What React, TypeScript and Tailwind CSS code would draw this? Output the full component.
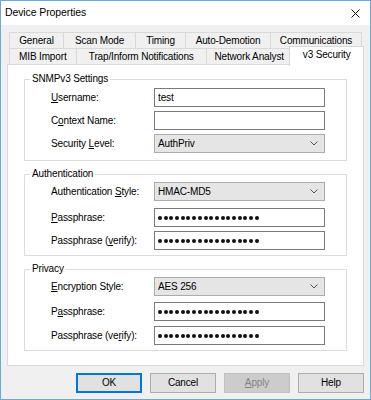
import React from "react";

const topTabs = [
  { label: "General", w: "w-[54px]" },
  { label: "Scan Mode", w: "w-[72px]" },
  { label: "Timing", w: "w-[50px]" },
  { label: "Auto-Demotion", w: "w-[85px]" },
  { label: "Communications", w: "w-[92px] border-r" },
];

const bottomTabs = [
  { label: "MIB Import", w: "w-[67px]" },
  { label: "Trap/Inform Notifications", w: "w-[131px]" },
  { label: "Network Analyst", w: "w-[86px]" },
];

function Key({ children }: { children: React.ReactNode }) {
  return <span className="underline underline-offset-[1px]">{children}</span>;
}

function Row({ label, children, className = "" }: { label: React.ReactNode; children: React.ReactNode; className?: string }) {
  return (
    <div className={`flex items-center pl-[26px] ${className}`}>
      <div className="w-[103px] leading-[12px]">{label}</div>
      {children}
    </div>
  );
}

function TextBox({ value }: { value: string }) {
  return (
    <div className="w-[171px] h-[19px] border border-[#7a7a7a] bg-white flex items-center pl-[3px] leading-[12px]">
      {value}
    </div>
  );
}

function Secret() {
  return (
    <div className="w-[171px] h-[19px] border border-[#7a7a7a] bg-white flex items-center pl-[3px] gap-[1.7px]">
      {Array.from({ length: 18 }).map((_, i) => (
        <span key={i} className="w-[4px] h-[4px] rounded-full bg-[#111]" />
      ))}
    </div>
  );
}

function Combo({ value }: { value: string }) {
  return (
    <div className="w-[171px] h-[19px] border border-[#acacac] bg-[#e5e5e5] flex items-center justify-between pl-[3px] pr-[6px] leading-[12px]">
      <span>{value}</span>
      <svg width="8" height="5" viewBox="0 0 8 5">
        <path d="M0.5 0.5 L4 4 L7.5 0.5" fill="none" stroke="#555" strokeWidth="1" />
      </svg>
    </div>
  );
}

function Group({ title, children, className = "" }: { title: string; children: React.ReactNode; className?: string }) {
  return (
    <fieldset className={`border border-[#dcdcdc] ${className}`}>
      <legend className="ml-[5px] px-[2px] leading-[12px]">{title}</legend>
      {children}
    </fieldset>
  );
}

export default function App() {
  return (
    <div className="w-[371px] h-[400px] border border-[#6ea7df] bg-[#f0f0f0] flex flex-col font-['Liberation_Sans',Arial,sans-serif] text-[10px] tracking-[-0.15px] text-black">
      {/* Title bar */}
      <div className="h-[24px] bg-white flex items-center justify-between pl-[4px] pr-[10px]">
        <span className="text-[10.5px] tracking-[-0.1px]">Device Properties</span>
        <svg width="9" height="9" viewBox="0 0 9 9">
          <path d="M0.5 0.5 L8.5 8.5 M8.5 0.5 L0.5 8.5" stroke="#111" strokeWidth="1" />
        </svg>
      </div>

      <div className="flex-1 px-[6px] pt-[7px]">
        {/* Tabs */}
        <div className="flex h-[17px] ml-[2px]">
          {topTabs.map((t) => (
            <div
              key={t.label}
              className={`${t.w} h-[17px] border-l border-t border-b border-[#d9d9d9] flex items-center justify-center leading-[12px]`}
            >
              {t.label}
            </div>
          ))}
        </div>
        <div className="flex h-[17px] ml-[2px] -mt-px">
          {bottomTabs.map((t) => (
            <div
              key={t.label}
              className={`${t.w} h-[17px] border-l border-t border-[#d9d9d9] flex items-center justify-center leading-[12px]`}
            >
              {t.label}
            </div>
          ))}
          <div className="relative z-10 w-[75px] h-[20px] -mt-[2px] -ml-[2px] border-l border-t border-r border-[#d9d9d9] bg-white flex items-start justify-center pt-[2px] leading-[12px]">
            v3 Security
          </div>
        </div>

        {/* Panel */}
        <div className="h-[302px] -mt-px border border-[#d9d9d9] bg-white px-[16px] pt-[8px]">
          <Group title="SNMPv3 Settings" className="pt-[3px] pb-[7px]">
            <Row label={<><Key>U</Key>sername:</>}>
              <TextBox value="test" />
            </Row>
            <Row className="mt-[4px]" label={<>C<Key>o</Key>ntext Name:</>}>
              <TextBox value="" />
            </Row>
            <Row className="mt-[4px]" label={<>Security <Key>L</Key>evel:</>}>
              <Combo value="AuthPriv" />
            </Row>
          </Group>

          <Group title="Authentication" className="mt-[7px] pt-[2px] pb-[5px]">
            <Row label={<>Authentication <Key>S</Key>tyle:</>}>
              <Combo value="HMAC-MD5" />
            </Row>
            <Row className="mt-[7px]" label={<><Key>P</Key>assphrase:</>}>
              <Secret />
            </Row>
            <Row className="mt-[4px]" label={<>Passphrase (<Key>v</Key>erify):</>}>
              <Secret />
            </Row>
          </Group>

          <Group title="Privacy" className="mt-[7px] pt-[2px] pb-[5px]">
            <Row label={<><Key>E</Key>ncryption Style:</>}>
              <Combo value="AES 256" />
            </Row>
            <Row className="mt-[6px]" label={<>P<Key>a</Key>ssphrase:</>}>
              <Secret />
            </Row>
            <Row className="mt-[5px]" label={<>Passphrase (ve<Key>r</Key>ify):</>}>
              <Secret />
            </Row>
          </Group>
        </div>

        {/* Buttons */}
        <div className="flex justify-end gap-[8px] mt-[7px]">
          <button className="w-[66px] h-[20px] border-2 border-[#0078d7] bg-[#e1e1e1] leading-[12px]">OK</button>
          <button className="w-[66px] h-[20px] border border-[#adadad] bg-[#e1e1e1] leading-[12px]">Cancel</button>
          <button className="w-[66px] h-[20px] border border-[#bfbfbf] bg-[#cccccc] text-[#838383] leading-[12px]">
            <Key>A</Key>pply
          </button>
          <button className="w-[66px] h-[20px] border border-[#adadad] bg-[#e1e1e1] leading-[12px]">Help</button>
        </div>
      </div>
    </div>
  );
}
